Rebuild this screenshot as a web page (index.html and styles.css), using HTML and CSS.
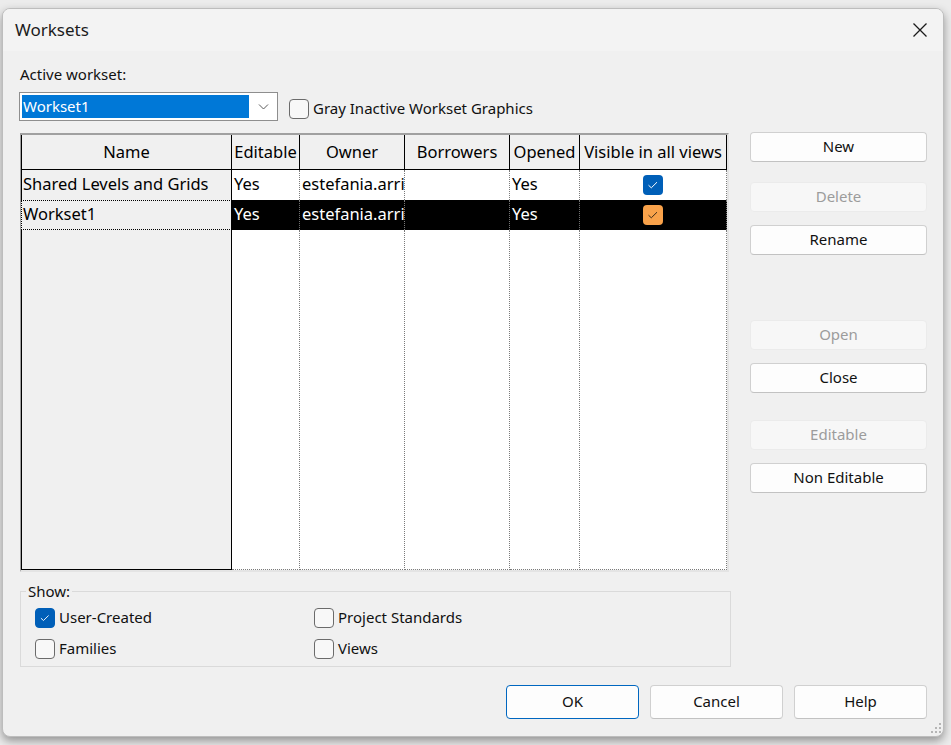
FILE: index.html
```html
<!DOCTYPE html>
<html lang="en">
<head>
<meta charset="utf-8">
<title>Worksets</title>
<link rel="stylesheet" href="styles.css">
</head>
<body>
<div class="window">
  <div class="titlebar">
    <span class="title">Worksets</span>
    <svg class="close" width="16" height="16" viewBox="0 0 16 16"><path d="M1.5 1.5L14.5 14.5M14.5 1.5L1.5 14.5" stroke="#1a1a1a" stroke-width="1.3" fill="none"/></svg>
  </div>
  <div class="content">
    <div class="label">Active workset:</div>
    <div class="active-row">
      <div class="combo">
        <span class="combo-sel">Workset1</span>
        <svg class="chev" width="11" height="7" viewBox="0 0 11 7"><path d="M1 1.5L5.5 6L10 1.5" stroke="#5a5a5a" stroke-width="1" fill="none"/></svg>
      </div>
      <div class="cb gray"><span class="box"></span><span class="t">Gray Inactive Workset Graphics</span></div>
    </div>
    <div class="main">
      <div class="left">
        <div class="grid">
          <div class="hc first">Name</div>
          <div class="hc">Editable</div>
          <div class="hc">Owner</div>
          <div class="hc">Borrowers</div>
          <div class="hc">Opened</div>
          <div class="hc">Visible in all views</div>

          <div class="nc">Shared Levels and Grids</div>
          <div class="dc">Yes</div>
          <div class="dc">estefania.arri</div>
          <div class="dc"></div>
          <div class="dc">Yes</div>
          <div class="dc center"><span class="tick blue"><svg width="20" height="20" viewBox="0 0 20 20"><path d="M5.5 10.2L8.3 12.8L14 7.2" stroke="#fff" stroke-width="1" fill="none"/></svg></span></div>

          <div class="nc focus">Workset1</div>
          <div class="dc sel">Yes</div>
          <div class="dc sel">estefania.arri</div>
          <div class="dc sel"></div>
          <div class="dc sel">Yes</div>
          <div class="dc sel center"><span class="tick orange"><svg width="20" height="20" viewBox="0 0 20 20"><path d="M5.5 10.2L8.3 12.8L14 7.2" stroke="#3a2a18" stroke-width="1" fill="none"/></svg></span></div>

          <div class="nc fill"></div>
          <div class="dc fill"></div>
          <div class="dc fill"></div>
          <div class="dc fill"></div>
          <div class="dc fill"></div>
          <div class="dc fill"></div>
        </div>
        <fieldset class="show">
          <legend>Show:</legend>
          <div class="opts">
            <div class="cb"><span class="box checked"><svg width="20" height="20" viewBox="0 0 20 20"><path d="M5.5 10.2L8.3 12.8L14 7.2" stroke="#fff" stroke-width="1" fill="none"/></svg></span><span class="t">User-Created</span></div>
            <div class="cb"><span class="box"></span><span class="t">Project Standards</span></div>
            <div class="cb"><span class="box"></span><span class="t">Families</span></div>
            <div class="cb"><span class="box"></span><span class="t">Views</span></div>
          </div>
        </fieldset>
      </div>
      <div class="side">
        <div class="btn">New</div>
        <div class="btn disabled gap20">Delete</div>
        <div class="btn gap13">Rename</div>
        <div class="btn disabled gap65">Open</div>
        <div class="btn gap13">Close</div>
        <div class="btn disabled gap27">Editable</div>
        <div class="btn gap13">Non Editable</div>
      </div>
    </div>
    <div class="footer">
      <div class="btn wide default">OK</div>
      <div class="btn wide">Cancel</div>
      <div class="btn wide">Help</div>
    </div>
  </div>
  <svg class="grip" width="10" height="10" viewBox="0 0 10 10">
    <rect x="8" y="0" width="2" height="2" fill="#b5b5b5"/>
    <rect x="4" y="4" width="2" height="2" fill="#b5b5b5"/>
    <rect x="8" y="4" width="2" height="2" fill="#b5b5b5"/>
    <rect x="0" y="8" width="2" height="2" fill="#b5b5b5"/>
    <rect x="4" y="8" width="2" height="2" fill="#b5b5b5"/>
    <rect x="8" y="8" width="2" height="2" fill="#b5b5b5"/>
  </svg>
</div>
</body>
</html>
```

FILE: styles.css
```css
* { box-sizing: border-box; }
html, body { margin: 0; padding: 0; }
body {
  background: #ececec;
  font-family: "Noto Sans", "Open Sans", sans-serif;
  color: #000;
  width: 951px;
  height: 745px;
  overflow: hidden;
}
.window {
  position: relative;
  margin: 8px 0 0 2px;
  width: 942px;
  height: 729px;
  background: #f0f0f0;
  border: 1px solid #bdbdbd;
  border-radius: 8px;
  box-shadow: 0 4px 10px rgba(0,0,0,0.38);
  overflow: hidden;
}
.titlebar {
  height: 42px;
  display: flex;
  align-items: center;
  justify-content: space-between;
  padding: 0 15px 0 12px;
  background: #f3f3f3;
}
.title { font-size: 17px; color: #1b1b1b; padding-bottom: 2px; }
.close { display: block; margin-top: -1px; }
.content { padding: 13px 16px 0 17px; }
.label { font-size: 15px; line-height: 20px; height: 20px; color: #111; }
.active-row {
  margin-top: 8px;
  height: 29px;
  display: flex;
  align-items: center;
}
.combo {
  margin-left: -1px;
  width: 259px;
  height: 29px;
  border: 1px solid #8e8e8e;
  background: #fff;
  padding: 2px;
  display: flex;
  align-items: center;
}
.combo-sel {
  width: 227px;
  height: 23px;
  background: #0078d7;
  color: #fff;
  font-size: 15px;
  line-height: 22px;
  padding-left: 1px;
}
.chev { margin-left: 9px; display: block; }
.cb {
  display: flex;
  align-items: center;
  gap: 4px;
  font-size: 15px;
  line-height: 20px;
  color: #111;
  height: 20px;
}
.cb .t { padding-bottom: 2px; }
.cb.gray { margin-left: 11px; margin-top: 4px; }
.box {
  width: 20px;
  height: 20px;
  border: 1px solid #6b6b6b;
  border-radius: 4px;
  background: #f8f8f8;
  flex: none;
  display: flex;
  align-items: center;
  justify-content: center;
}
.box svg { display: block; }
.box.checked { background: #005fb8; border-color: #005fb8; }
.main {
  margin-top: 11px;
  display: flex;
  gap: 19px;
}
.left { width: 711px; }
.grid {
  margin-top: 1px;
  width: 709px;
  height: 439px;
  background: #fff;
  border-top: 2px solid #a0a0a0;
  border-left: 1px solid #a0a0a0;
  border-right: 2px solid #e4e4e4;
  border-bottom: 2px solid #e4e4e4;
  display: grid;
  grid-template-columns: 211px 68px 105px 105px 70px 147px;
  grid-template-rows: 35px 30px 30px 340px;
  font-size: 16.5px;
}
.hc {
  background: #f0f0f0;
  border-right: 1px solid #000;
  border-bottom: 1px solid #000;
  text-align: center;
  line-height: 34px;
  white-space: nowrap;
  overflow: hidden;
}
.hc.first { border-left: 1px solid #000; }
.nc {
  background: #f0f0f0;
  border-left: 1px solid #000;
  border-right: 1px solid #000;
  padding-left: 1px;
  line-height: 28px;
  white-space: nowrap;
  overflow: hidden;
}
.nc.focus {
  border: 1px dotted #000;
  border-right: 1px solid #000;
  line-height: 26px;
}
.nc.fill { border-bottom: 1px solid #000; }
.dc {
  border-right: 1px dotted #7a7a7a;
  padding-left: 2px;
  line-height: 28px;
  white-space: nowrap;
  overflow: hidden;
}
.dc.fill { border-bottom: 1px dotted #7a7a7a; }
.dc.sel { background: #000; color: #fff; }
.dc.center {
  display: flex;
  align-items: center;
  justify-content: center;
  padding-left: 0;
}
.tick {
  width: 20px;
  height: 20px;
  border-radius: 4px;
  display: block;
}
.tick svg { display: block; }
.tick.blue { background: #005fb8; }
.tick.orange { background: #f9a24a; }
.show {
  margin: 9px 0 0 0;
  width: 711px;
  border: 1px solid #dadada;
  padding: 0 0 0 5px;
  min-width: 0;
}
.show legend {
  padding: 0 2px;
  font-size: 15px;
  line-height: 20px;
  color: #111;
}
.opts {
  display: grid;
  grid-template-columns: 279px auto;
  row-gap: 11px;
  padding: 7px 0 7px 9px;
}
.side {
  width: 177px;
  display: flex;
  flex-direction: column;
}
.btn {
  height: 30px;
  width: 177px;
  border: 1px solid #d0d0d0;
  border-bottom-color: #c2c2c2;
  border-radius: 4px;
  background: #fdfdfd;
  font-size: 15px;
  line-height: 26px;
  text-align: center;
  color: #111;
}
.btn.disabled {
  background: #f7f7f7;
  border-color: #ebebeb;
  color: #9c9c9c;
}
.gap20 { margin-top: 20px; }
.gap13 { margin-top: 13px; }
.gap65 { margin-top: 65px; }
.gap27 { margin-top: 27px; }
.footer {
  margin-top: 18px;
  display: flex;
  justify-content: flex-end;
  gap: 11px;
}
.btn.wide {
  width: 133px;
  height: 34px;
  line-height: 30px;
}
.btn.default { border-color: #0067c0; }
.grip {
  position: absolute;
  right: 2px;
  bottom: 3px;
  display: block;
}
```
